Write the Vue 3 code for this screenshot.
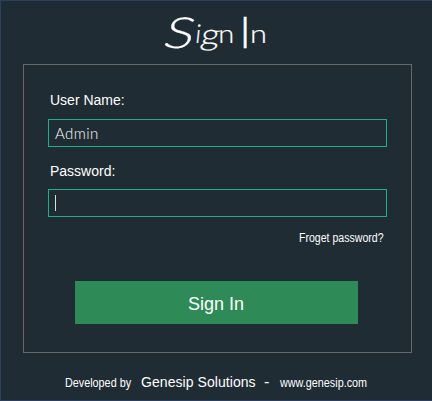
<script setup>
import { ref } from 'vue'

const username = ref('Admin')
const password = ref('')
</script>

<template>
  <main class="window">
    <h1 class="title">
      <svg width="110" height="48" viewBox="0 0 110 48" role="heading" aria-label="Sign In">
        <text class="cap" transform="translate(-1.5 38.2) skewX(-14)" textLength="30" lengthAdjust="spacingAndGlyphs">S</text>
        <text class="low" transform="translate(31.5 33) skewX(-6)">i</text>
        <text class="low tail" transform="translate(36.5 35.2) skewX(-10)" textLength="19" lengthAdjust="spacingAndGlyphs">g</text>
        <text class="low" x="55.3" y="33" textLength="16" lengthAdjust="spacingAndGlyphs">n</text>
        <text class="cap stem" x="76.5" y="38">I</text>
        <text class="low" x="87" y="33" textLength="17" lengthAdjust="spacingAndGlyphs">n</text>
      </svg>
    </h1>
    <form class="panel" @submit.prevent>
      <label class="label" for="user">User Name:</label>
      <div class="field"><input id="user" v-model="username" type="text" /></div>
      <label class="label second" for="pass">Password:</label>
      <div class="field"><span class="caret"></span><input id="pass" v-model="password" type="password" /></div>
      <a class="forgot"><span>Froget password?</span></a>
      <button class="submit" type="submit"><span>Sign In</span></button>
    </form>
    <footer class="footer">
      <span class="small dev">Developed by</span>
      <span class="company">Genesip Solutions</span>
      <span class="dash">-</span>
      <span class="small site">www.genesip.com</span>
    </footer>
  </main>
</template>

<style>
body {
  margin: 0;
  background: #202c34;
}
</style>

<style scoped>
.window {
  box-sizing: border-box;
  width: 432px;
  height: 401px;
  overflow: hidden;
  background: #202c34;
  border: 1px solid #2b3f60;
  border-right: 0;
  color: #fff;
  font-family: "Liberation Sans", Arial, sans-serif;
}
.title {
  height: 48px;
  margin: 9px 0 6px 162px;
  font-weight: 400;
}
.title svg {
  display: block;
  overflow: visible;
}
.title text {
  fill: #fff;
  stroke: #fff;
  stroke-width: 0.2px;
  font-family: Lato, "Liberation Sans", sans-serif;
  font-weight: 300;
}
.title .cap {
  font-size: 43px;
}
.title .stem {
  stroke-width: 0.5px;
}
.title .low {
  font-size: 26px;
}
.title .tail {
  font-size: 30px;
}
.panel {
  box-sizing: border-box;
  width: 389px;
  height: 289px;
  margin-left: 22px;
  padding: 26px 24px 0;
  border: 1px solid #686868;
  display: flex;
  flex-direction: column;
}
.label {
  height: 18px;
  padding-left: 2px;
  margin-bottom: 10px;
  font-size: 14px;
  line-height: 19px;
}
.label.second {
  height: 17px;
  margin-top: 15px;
}
.field {
  box-sizing: border-box;
  flex: none;
  width: 339px;
  height: 28px;
  padding: 0 6px;
  border: 1px solid #1eaf86;
  display: flex;
  align-items: center;
}
.field input {
  flex: 1;
  min-width: 0;
  padding: 0;
  border: 0;
  outline: 0;
  background: transparent;
  color: #fff;
  font: 300 15px/26px Lato, sans-serif;
  letter-spacing: 0.4px;
}
.caret {
  width: 1px;
  height: 16px;
  background: #ddd;
}
.forgot {
  align-self: flex-end;
  margin: 14px 4px 0 0;
  width: 84px;
  height: 14px;
  font-size: 12px;
  line-height: 14px;
}
.forgot span {
  display: inline-block;
  white-space: nowrap;
  transform: scaleX(0.88);
  transform-origin: left;
}
.submit {
  width: 283px;
  height: 43px;
  margin: 36px 0 0 27px;
  padding: 3px 1px 0 0;
  border: 0;
  background: #2e8b57;
  color: #fff;
  font: 18px/40px "Liberation Sans", Arial, sans-serif;
}
.footer {
  display: flex;
  align-items: baseline;
  height: 20px;
  margin: 19px 0 0 64px;
  line-height: 20px;
  white-space: nowrap;
}
.small {
  font-size: 12px;
  transform-origin: left;
}
.dev {
  width: 76px;
  transform: scaleX(0.9);
}
.company {
  width: 123px;
  font-size: 14px;
  letter-spacing: 0.06px;
}
.dash {
  width: 16px;
  font-size: 16px;
}
.site {
  transform: scaleX(0.9);
}
</style>
